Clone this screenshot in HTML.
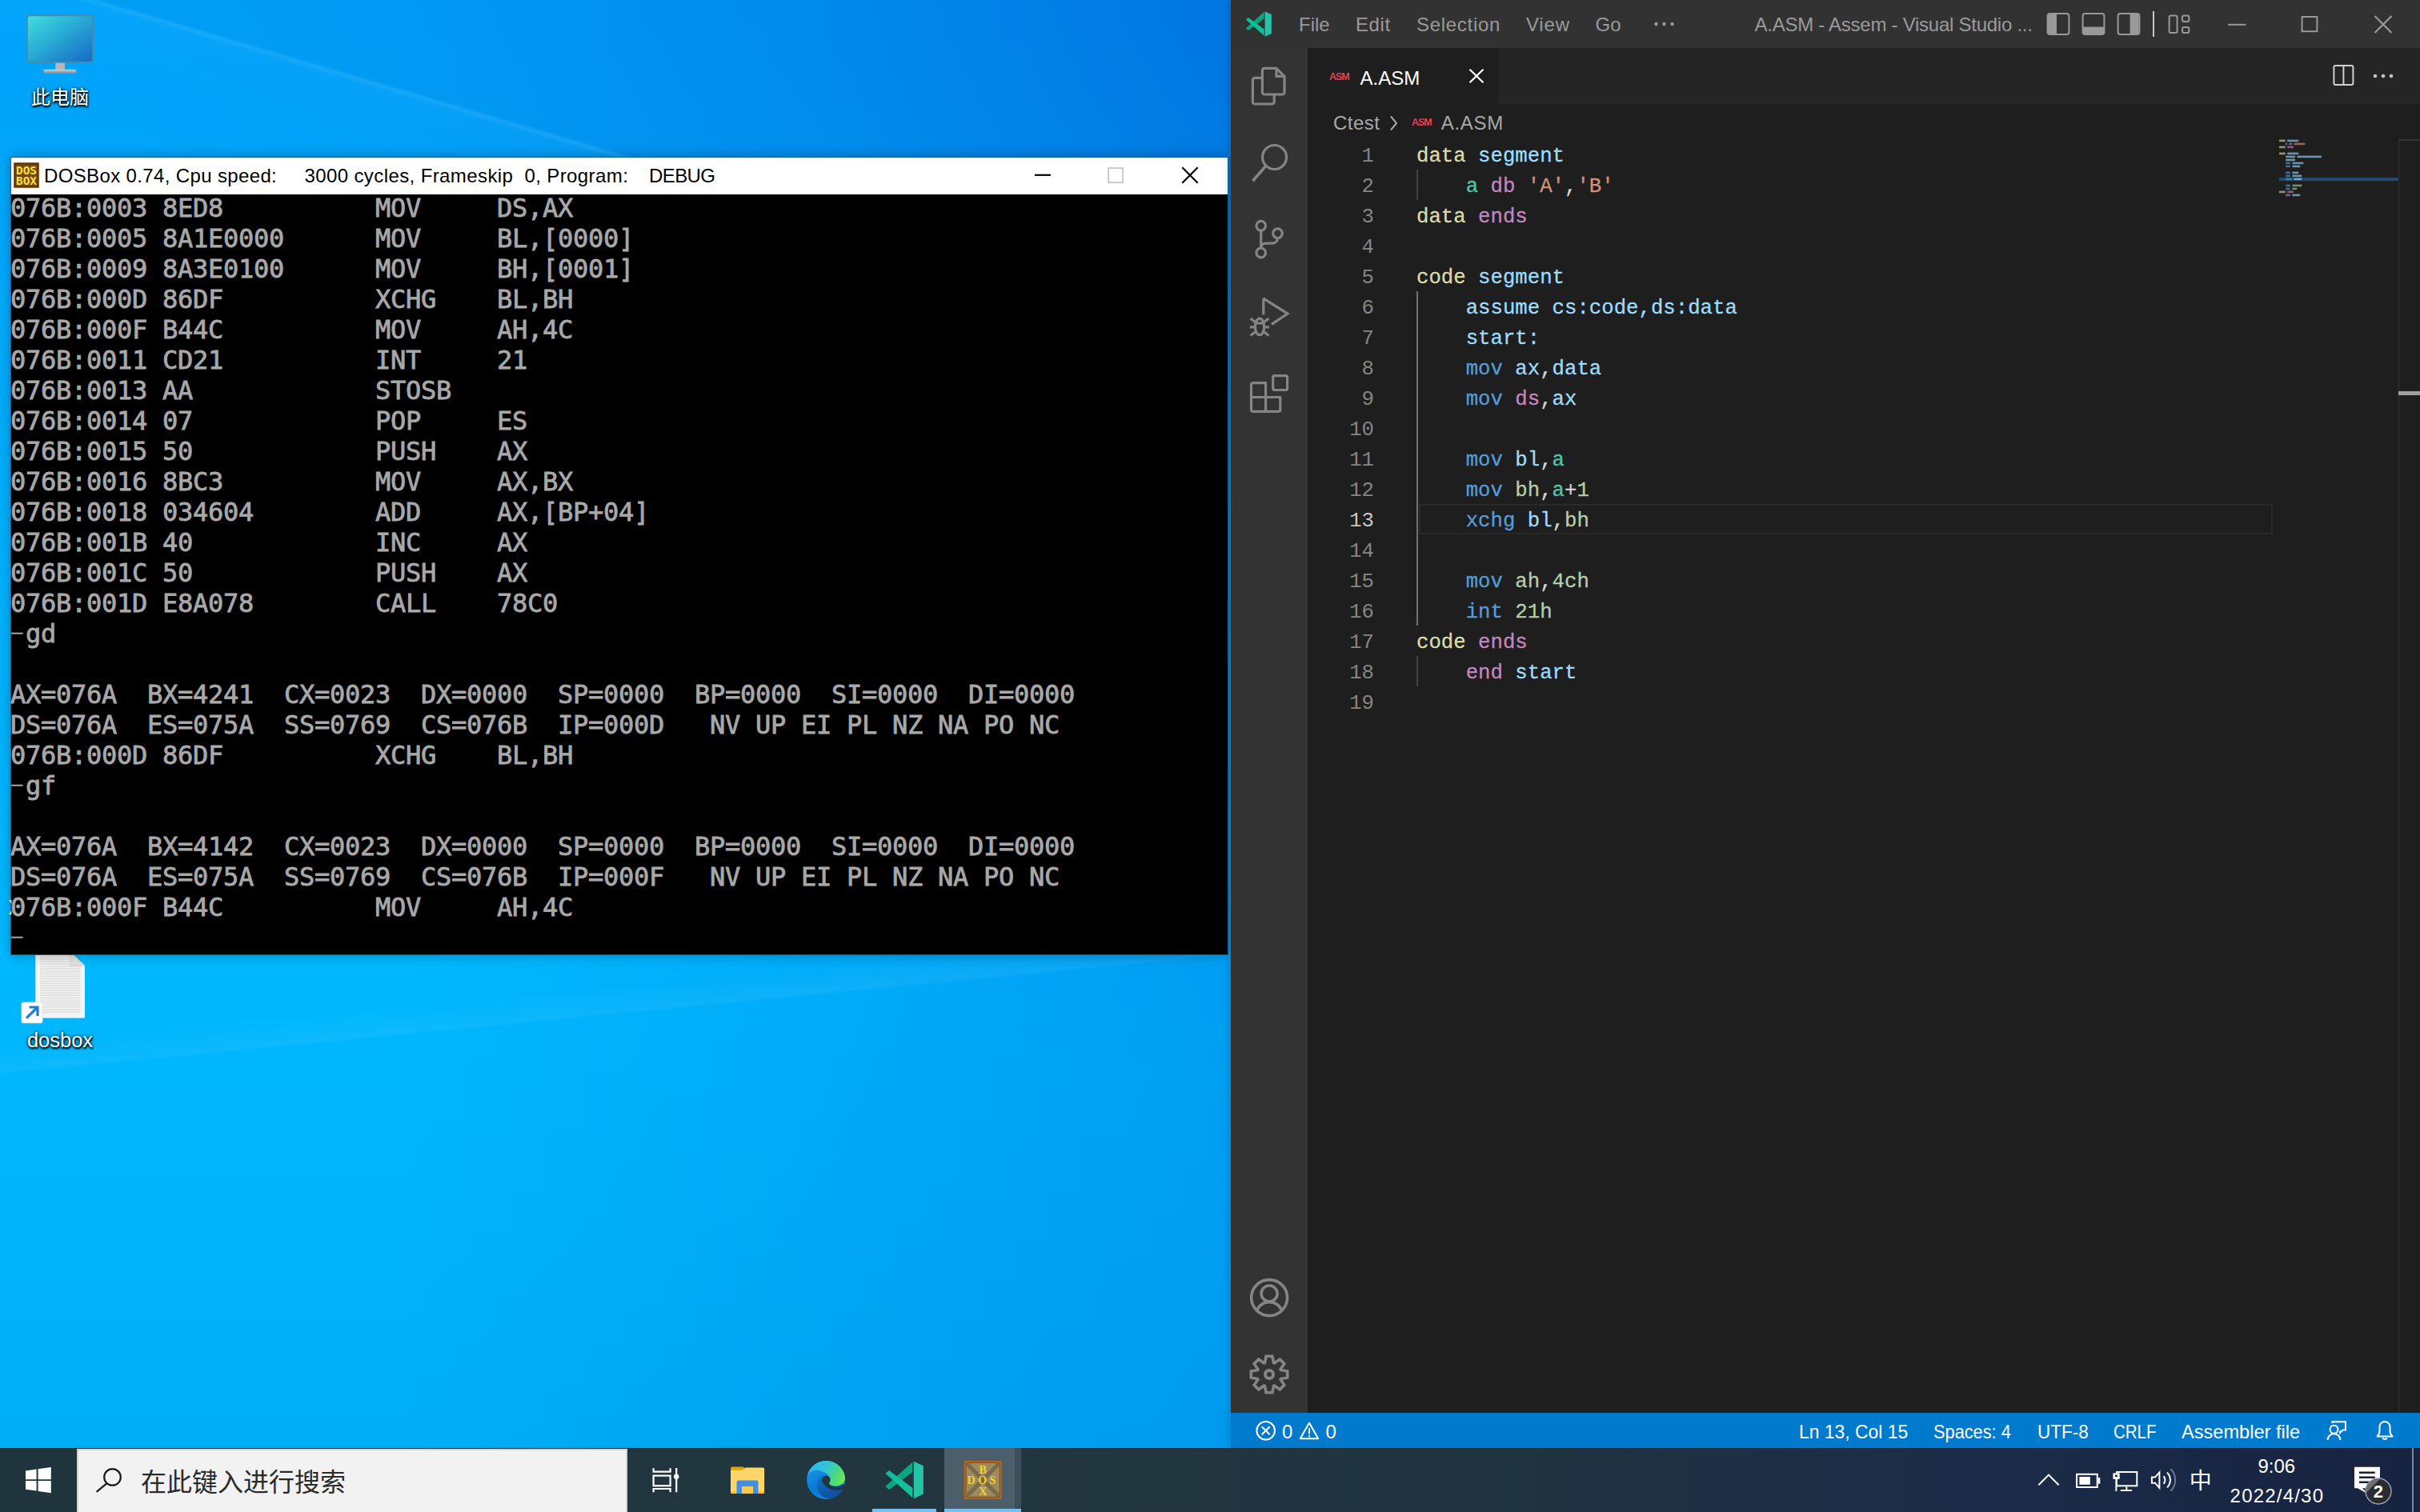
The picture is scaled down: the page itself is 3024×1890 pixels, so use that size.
<!DOCTYPE html>
<html lang="zh">
<head>
<meta charset="utf-8">
<title>Desktop</title>
<style>
*{box-sizing:border-box;margin:0;padding:0}
html,body{width:3024px;height:1890px;overflow:hidden}
body{position:relative;font-family:"Liberation Sans","Noto Sans CJK SC",sans-serif;background:#00a2f0;}
.abs{position:absolute}
#wall{position:absolute;left:0;top:0;width:3024px;height:1890px;
 background:
  radial-gradient(ellipse 1800px 1500px at 1900px -100px, rgba(0,70,200,.40) 0%, rgba(0,70,200,.30) 24%, rgba(0,70,200,.12) 52%, rgba(0,70,200,.07) 73%, rgba(0,70,200,0) 100%),
  linear-gradient(90deg, rgba(0,100,220,0) 500px, rgba(0,100,220,.27) 1540px),
  linear-gradient(180deg,#00a3fa 0px,#00a6fa 200px,#00b0fc 700px,#00b8fe 1200px,#00b4fa 1500px,#00aef5 1810px);}
#ray1{position:absolute;left:0;top:0;width:1540px;height:200px;overflow:hidden}
/* DOSBox window */
#dos{position:absolute;left:13px;top:196px;width:1522px;height:998px;background:#000;border:1px solid #0f5f9c;box-shadow:0 0 14px rgba(0,0,0,.28)}
#dostitle{position:absolute;left:0;top:0;width:1520px;height:46px;background:#fff;color:#000;font-size:24px;line-height:46px;white-space:pre}
#dostitle span{position:absolute;top:0}
#dosscreen{position:absolute;left:0;top:46px;width:1520px;height:950px;background:#000;color:#a8a8a8;text-indent:0;padding-left:0;
 font-family:"DejaVu Sans Mono","Liberation Mono",monospace;font-weight:normal;-webkit-text-stroke:.8px #a8a8a8;font-size:32px;line-height:38px;white-space:pre;letter-spacing:-0.264px}
/* VS Code */
#vsc{position:absolute;left:1538px;top:0;width:1486px;height:1810px;background:#1e1e1e;box-shadow:-3px 0 10px rgba(0,0,0,.13)}
#vtitle{position:absolute;left:0;top:0;width:1486px;height:60px;background:#323233;color:#9a9a9a;font-size:24px;line-height:62px}
#vtitle span{position:absolute;top:0;white-space:pre}
#act{position:absolute;left:0;top:60px;width:96px;height:1706px;background:#333333}
#tabs{position:absolute;left:96px;top:60px;width:1390px;height:70px;background:#252526}
#tab{position:absolute;left:0;top:0;width:238px;height:70px;background:#1e1e1e;color:#fff;font-size:24px;line-height:70px}
#crumbs{position:absolute;left:96px;top:130px;width:1390px;height:44px;color:#a9a9a9;font-size:24px;line-height:47.400px}
#crumbs span{position:absolute;top:0;white-space:pre}
#code{position:absolute;left:96px;top:174px;width:1390px;height:1592px;font-family:"Liberation Mono",monospace;font-size:25.7px;line-height:38px;color:#d4d4d4;white-space:pre}
.ln{position:absolute;left:0;width:83px;text-align:right;color:#858585;height:38px;margin-top:2.500px}
.cl{position:absolute;left:136px;height:38px;margin-top:2.600px;-webkit-text-stroke:.3px currentColor}
.asm{color:#e3414f;font-size:12.5px;font-weight:bold;letter-spacing:-1.1px}
.y{color:#dcdcaa}.b{color:#9cdcfe}.t{color:#4ec9b0}.p{color:#c586c0}.o{color:#ce9178}.k{color:#569cd6}.n{color:#b5cea8}
#status{position:absolute;left:0;top:1766px;width:1486px;height:44px;background:#007acc;color:#fff;font-size:24px;line-height:48px}
#status span{position:absolute;top:0;white-space:pre;transform-origin:0 0}
/* taskbar */
#task{position:absolute;left:0;top:1810px;width:3024px;height:80px;background:linear-gradient(90deg,#20343e 0px,#22363f 1300px,#203340 1900px,#1e2e44 2200px,#1b2b48 2500px,#162341 3024px)}
#search{position:absolute;left:96px;top:1px;width:688px;height:80px;background:#f2f2f2;border:2px solid #d4d4d4;border-bottom:none;color:#2b2b2b;font-size:32px;line-height:80px}
.dash{display:inline-block;transform:translate(-1.500px,-1.800px) scale(1.650,.560)}
.dlabel{position:absolute;color:#fff;font-size:24px;text-align:center;text-shadow:0 1px 3px rgba(0,0,0,.9),0 0 4px rgba(0,0,0,.7),1px 2px 2px rgba(0,0,0,.8)}
</style>
</head>
<body>
<div id="wall"></div>
<div class="abs" style="left:0;top:0;width:1540px;height:200px;background:linear-gradient(196.400deg,rgba(0,50,150,.045) 0,rgba(0,50,150,.045) 63.600%,rgba(255,255,255,.085) 64.300%,rgba(255,255,255,.02) 65.300%,rgba(255,255,255,0) 80%)"></div>
<div class="abs" style="left:0;top:1194px;width:1538px;height:616px;overflow:hidden"><div class="abs" style="left:-50px;top:81px;width:1700px;height:140px;transform-origin:0 0;transform:rotate(-5.500deg);background:linear-gradient(180deg,rgba(255,255,255,0) 25%,rgba(255,255,255,.05) 49%,rgba(255,255,255,0) 52%)"></div></div>
<!-- desktop icons -->
<svg class="abs" style="left:0;top:0" width="200" height="160" viewBox="0 0 200 160">
<defs><linearGradient id="mon" x1="0" y1="0" x2="1" y2="1"><stop offset="0" stop-color="#3fe0dc"/><stop offset=".5" stop-color="#27a6d3"/><stop offset="1" stop-color="#1568c4"/></linearGradient><linearGradient id="base" x1="0" y1="0" x2="0" y2="1"><stop offset="0" stop-color="#cfd3d6"/><stop offset="1" stop-color="#7e848a"/></linearGradient></defs>
<rect x="69.300" y="78" width="11.600" height="10" fill="#b4b9bd"/>
<rect x="54.500" y="86.800" width="40.700" height="5.200" rx="1.500" fill="url(#base)"/>
<rect x="33.800" y="19.200" width="82.400" height="58.600" rx="4" fill="url(#mon)" stroke="#4a8aad" stroke-width="2"/>
</svg>
<div class="dlabel" style="left:15px;top:105px;width:120px;font-size:24px;line-height:34px">此电脑</div>
<svg class="abs" style="left:20px;top:1190px" width="100" height="95" viewBox="20 1190 100 95">
<defs><pattern id="lines" x="0" y="1195.500" width="10" height="3" patternUnits="userSpaceOnUse"><rect x="0" y="0" width="10" height="1.200" fill="#d4d4d4"/></pattern></defs>
<path d="M44.300,1190 H88 L106,1207 V1272.400 H44.300 Z" fill="#f5f5f5"/>
<rect x="50" y="1195.500" width="37" height="12" fill="url(#lines)"/><rect x="50" y="1207.500" width="50.500" height="59" fill="url(#lines)"/>
<path d="M88,1190 V1207 H106 Z" fill="#e2e2e2"/><path d="M88,1193 V1207 H106" fill="none" stroke="#cfcfcf" stroke-width="1"/>
<rect x="27" y="1253" width="26" height="25.700" rx="2" fill="#fff" stroke="#d8e6f2" stroke-width="1"/>
<path d="M33,1272.500 L46,1260 M36.500,1259 H47 V1270" fill="none" stroke="#1f7fd8" stroke-width="3.200"/>
</svg>
<div class="dlabel" style="left:15px;top:1282.500px;width:120px;font-size:25.500px;line-height:34px">dosbox</div>

<!-- DOSBOX -->
<svg class="abs" style="left:8px;top:1122px;z-index:5" width="8" height="24" viewBox="0 0 8 24"><path d="M3,3 L6.500,3 L6.500,8 Z M3,21 L6.500,21 L6.500,16 Z" fill="#fff" opacity=".85"/></svg>
<div id="dos">
<div id="dostitle"><svg class="abs" style="left:0;top:0" width="1520" height="46" viewBox="14 197 1520 46">
<rect x="17.200" y="203.200" width="31.600" height="31.600" fill="#7a4711"/><rect x="18.700" y="204.700" width="28.600" height="28.600" fill="none" stroke="#5a3208" stroke-width="1.500"/>
<g font-family="'DejaVu Sans Mono','Liberation Mono',monospace" font-weight="bold" font-size="13.500" fill="#f7e23c" text-anchor="middle"><text x="33" y="217.500" textLength="26" lengthAdjust="spacingAndGlyphs">DOS</text><text x="33" y="231" textLength="26" lengthAdjust="spacingAndGlyphs">BOX</text></g>
<path d="M1293,218.800 h20" stroke="#000" stroke-width="2.200"/>
<rect x="1385.100" y="210.100" width="18" height="18" fill="none" stroke="#cacaca" stroke-width="2"/>
<path d="M1477.300,209.300 l19.400,19.400 M1496.700,209.300 l-19.400,19.400" stroke="#000" stroke-width="2.200"/>
</svg><span style="left:41px;letter-spacing:.36px">DOSBox 0.74, Cpu speed:</span><span style="left:366.400px;letter-spacing:.4px">3000 cycles, Frameskip  0, Program:</span><span style="left:797px;letter-spacing:-.6px">DEBUG</span></div>
<div id="dosscreen"><div style="position:absolute;left:-1px;top:-2px">076B:0003 8ED8          MOV     DS,AX
076B:0005 8A1E0000      MOV     BL,[0000]
076B:0009 8A3E0100      MOV     BH,[0001]
076B:000D 86DF          XCHG    BL,BH
076B:000F B44C          MOV     AH,4C
076B:0011 CD21          INT     21
076B:0013 AA            STOSB
076B:0014 07            POP     ES
076B:0015 50            PUSH    AX
076B:0016 8BC3          MOV     AX,BX
076B:0018 034604        ADD     AX,[BP+04]
076B:001B 40            INC     AX
076B:001C 50            PUSH    AX
076B:001D E8A078        CALL    78C0
<span class="dash">-</span>gd

AX=076A  BX=4241  CX=0023  DX=0000  SP=0000  BP=0000  SI=0000  DI=0000
DS=076A  ES=075A  SS=0769  CS=076B  IP=000D   NV UP EI PL NZ NA PO NC
076B:000D 86DF          XCHG    BL,BH
<span class="dash">-</span>gf

AX=076A  BX=4142  CX=0023  DX=0000  SP=0000  BP=0000  SI=0000  DI=0000
DS=076A  ES=075A  SS=0769  CS=076B  IP=000F   NV UP EI PL NZ NA PO NC
076B:000F B44C          MOV     AH,4C
<span class="dash">-</span></div></div>
</div>

<!-- VS CODE -->
<div id="vsc">
<div id="vtitle"><svg class="abs" style="left:0;top:0" width="1486" height="60" viewBox="0 0 1486 60">
<polygon points="42.6,14.4 50.8,18.1 50.8,41.9 42.6,45.7" fill="#27c3a6"/>
<polygon points="18.9,35.3 22,38.1 41.7,23.2 41.7,14.8" fill="#0aa683"/>
<polygon points="18.9,24.5 21.9,21.9 41.7,36.6 41.7,44.7" fill="#10bf9b"/>
<g fill="#9a9a9a"><circle cx="531.5" cy="30" r="2.2"/><circle cx="541.5" cy="30" r="2.2"/><circle cx="551.5" cy="30" r="2.2"/></g>
<g fill="none" stroke="#999" stroke-width="2">
<rect x="1020.6" y="17" width="26.8" height="26" rx="3"/><path d="M1021,18 h11 v24 h-11 z" fill="#999" stroke="none"/>
<rect x="1064.6" y="17" width="26.8" height="26" rx="3"/><path d="M1065,33.6 h26 v8.4 h-26 z" fill="#999" stroke="none"/>
<rect x="1108.6" y="17" width="26.8" height="26" rx="3"/><path d="M1123.6,18 h11 v24 h-11 z" fill="#999" stroke="none"/>
<rect x="1172.6" y="19.4" width="10" height="21.6" rx="2"/><rect x="1189" y="19.4" width="8.4" height="7.6" rx="2"/><rect x="1189" y="34" width="8.4" height="7" rx="2"/>
<path d="M1246,30.8 h22.4"/>
<rect x="1338.6" y="21" width="18.8" height="18.2"/>
<path d="M1429.5,20 l21,21 M1450.5,20 l-21,21" stroke-width="2.2"/>
</g>
<rect x="1152" y="14" width="2" height="32" fill="#c8c8c8"/>
</svg><span style="left:85px">File</span><span style="left:156px;letter-spacing:.6px">Edit</span><span style="left:232px;letter-spacing:.7px">Selection</span><span style="left:369px;letter-spacing:.8px">View</span><span style="left:455.500px">Go</span><span style="left:654.500px;letter-spacing:-.26px">A.ASM - Assem - Visual Studio ...</span></div>
<div id="act"><svg class="abs" style="left:0;top:0" width="96" height="1706" viewBox="0 0 96 1706" fill="none" stroke="#858585" stroke-width="3.2" stroke-linejoin="round">
<g><path d="M57,25.4 H42 a2.6,2.6 0 0 0 -2.6,2.6 V55.4 a2.6,2.6 0 0 0 2.6,2.6 H64.4 a2.6,2.6 0 0 0 2.6,-2.6 V35.4 Z M57,25.4 V35.4 H67"/><path d="M39.3,37.3 H30 a2.6,2.6 0 0 0 -2.6,2.6 V67.4 a2.6,2.6 0 0 0 2.6,2.6 H51.6 a2.6,2.6 0 0 0 2.6,-2.6 V58"/></g>
<g transform="translate(0,96)"><circle cx="54.6" cy="40.5" r="15"/><path d="M44,51.1 L27.4,70.2" stroke-width="3.6"/></g>
<g transform="translate(0,192)"><circle cx="37.7" cy="30.2" r="5.8"/><circle cx="58.5" cy="39.7" r="5.8"/><circle cx="37.7" cy="64" r="5.8"/><path d="M37.7,36 V58.2 M58.5,45.5 c0,4 -3,6.6 -7,6.6 h-7 c-4,0 -6.8,2 -6.8,6"/></g>
<g transform="translate(0,288)"><path d="M40.8,45.5 V25.2 L71,44.1 L51,57.3" stroke-linejoin="miter" stroke-miterlimit="2"/><ellipse cx="36" cy="60.4" rx="5.6" ry="10.3"/><path d="M30.6,56 H41.4 M24.5,50 L30.5,54.5 M24,60.8 H30.4 M24.5,71.5 L30.5,67 M47.5,50 L41.5,54.5 M48,60.8 H41.6 M47.5,71.5 L41.5,67"/></g>
<g transform="translate(0,384)"><rect x="52.7" y="25.6" width="17.9" height="17.9" rx="2"/><path d="M43.6,34.7 H28 a2.5,2.5 0 0 0 -2.5,2.5 V67.9 a2.5,2.5 0 0 0 2.5,2.5 H59.3 a2.5,2.5 0 0 0 2.5,-2.5 V52.5 H43.6 Z M43.6,52.5 V70.4 M25.5,52.5 H43.6"/></g>
<g stroke-width="3.6"><circle cx="48.1" cy="1562.1" r="22.5"/><circle cx="48.1" cy="1557" r="10"/><path d="M32.5,1578.5 a16.5,16.5 0 0 1 31.2,0"/></g>
<g stroke-width="3.6" stroke-linejoin="miter"><path d="M42.5,1643.5 L44.1,1635.3 L51.9,1635.3 L53.5,1643.5 L54.4,1643.9 L61.3,1639.2 L66.8,1644.7 L62.1,1651.6 L62.5,1652.5 L70.7,1654.1 L70.7,1661.9 L62.5,1663.5 L62.1,1664.4 L66.8,1671.3 L61.3,1676.8 L54.4,1672.1 L53.5,1672.5 L51.9,1680.7 L44.1,1680.7 L42.5,1672.5 L41.6,1672.1 L34.7,1676.8 L29.2,1671.3 L33.9,1664.4 L33.5,1663.5 L25.3,1661.9 L25.3,1654.1 L33.5,1652.5 L33.9,1651.6 L29.2,1644.7 L34.7,1639.2 L41.6,1643.9Z"/><circle cx="48" cy="1658" r="5" stroke-width="4"/></g>
</svg></div>
<div id="tabs"><div id="tab"><span class="abs asm" style="left:27px;top:.500px">ASM</span><span class="abs" style="left:65.500px;top:2.500px">A.ASM</span><svg class="abs" style="left:200.500px;top:25px" width="20" height="20" viewBox="0 0 20 20"><path d="M1.5,1.8 L18.5,18.2 M18.5,1.8 L1.5,18.2" stroke="#fff" stroke-width="2.2" fill="none"/></svg></div><svg class="abs" style="left:1271px;top:16px" width="100" height="40" viewBox="0 0 100 40" fill="none" stroke="#d0d0d0" stroke-width="2"><rect x="11.4" y="6" width="24" height="24" rx="2"/><path d="M23.4,6 v24"/><g fill="#c5c5c5" stroke="none"><circle cx="63" cy="19" r="2.3"/><circle cx="73" cy="19" r="2.3"/><circle cx="83" cy="19" r="2.3"/></g></svg></div>
<div id="crumbs"><span style="left:32px;letter-spacing:.5px">Ctest</span><svg class="abs" style="left:100px;top:10px" width="16" height="26" viewBox="0 0 16 26"><path d="M4,5.500 L11,14 L4,22.500" fill="none" stroke="#a9a9a9" stroke-width="2"/></svg><span class="asm" style="left:130px">ASM</span><span style="left:166.800px;letter-spacing:.7px">A.ASM</span></div>
<div id="code"><div class="abs" style="left:139px;top:456px;width:1067px;height:38px;border:2px solid #2a2a2a"></div><div class="abs" style="left:136px;top:38px;width:2px;height:38px;background:#404040"></div><div class="abs" style="left:136px;top:190px;width:2px;height:418px;background:#707070"></div><div class="abs" style="left:136px;top:646px;width:2px;height:38px;background:#404040"></div><div class="ln" style="top:0px">1</div><div class="cl" style="top:0px"><span class="y">data</span> <span class="b">segment</span></div><div class="ln" style="top:38px">2</div><div class="cl" style="top:38px">    <span class="t">a</span> <span class="p">db</span> <span class="o">'A'</span>,<span class="o">'B'</span></div><div class="ln" style="top:76px">3</div><div class="cl" style="top:76px"><span class="y">data</span> <span class="p">ends</span></div><div class="ln" style="top:114px">4</div><div class="cl" style="top:114px"></div><div class="ln" style="top:152px">5</div><div class="cl" style="top:152px"><span class="y">code</span> <span class="b">segment</span></div><div class="ln" style="top:190px">6</div><div class="cl" style="top:190px">    <span class="b">assume cs:code,ds:data</span></div><div class="ln" style="top:228px">7</div><div class="cl" style="top:228px">    <span class="b">start:</span></div><div class="ln" style="top:266px">8</div><div class="cl" style="top:266px">    <span class="k">mov</span> <span class="b">ax</span>,<span class="b">data</span></div><div class="ln" style="top:304px">9</div><div class="cl" style="top:304px">    <span class="k">mov</span> <span class="p">ds</span>,<span class="b">ax</span></div><div class="ln" style="top:342px">10</div><div class="cl" style="top:342px"></div><div class="ln" style="top:380px">11</div><div class="cl" style="top:380px">    <span class="k">mov</span> <span class="b">bl</span>,<span class="t">a</span></div><div class="ln" style="top:418px">12</div><div class="cl" style="top:418px">    <span class="k">mov</span> <span class="n">bh</span>,<span class="t">a</span>+<span class="n">1</span></div><div class="ln" style="top:456px;color:#c6c6c6">13</div><div class="cl" style="top:456px">    <span class="k">xchg</span> <span class="b">bl</span>,<span class="n">bh</span></div><div class="ln" style="top:494px">14</div><div class="cl" style="top:494px"></div><div class="ln" style="top:532px">15</div><div class="cl" style="top:532px">    <span class="k">mov</span> <span class="n">ah</span>,<span class="n">4ch</span></div><div class="ln" style="top:570px">16</div><div class="cl" style="top:570px">    <span class="k">int</span> <span class="n">21h</span></div><div class="ln" style="top:608px">17</div><div class="cl" style="top:608px"><span class="y">code</span> <span class="p">ends</span></div><div class="ln" style="top:646px">18</div><div class="cl" style="top:646px">    <span class="p">end</span> <span class="b">start</span></div><div class="ln" style="top:684px">19</div><div class="cl" style="top:684px"></div></div>
<svg class="abs" style="left:1310px;top:174px" width="176" height="120" viewBox="2848 174 176 120"><rect x="2848" y="222" width="148.500" height="4.200" fill="#264f78" opacity=".85"/><rect x="2848.0" y="174.6" width="7.8" height="2.6" fill="#dcdcaa" opacity=".62"/><rect x="2858.2" y="174.6" width="13.9" height="2.6" fill="#9cdcfe" opacity=".62"/><rect x="2856.2" y="178.6" width="1.6" height="2.6" fill="#9cdcfe" opacity=".62"/><rect x="2860.3" y="178.6" width="3.7" height="2.6" fill="#c586c0" opacity=".62"/><rect x="2866.4" y="178.6" width="13.9" height="2.6" fill="#ce9178" opacity=".62"/><rect x="2848.0" y="182.6" width="7.8" height="2.6" fill="#dcdcaa" opacity=".62"/><rect x="2858.2" y="182.6" width="7.8" height="2.6" fill="#c586c0" opacity=".62"/><rect x="2848.0" y="190.6" width="7.8" height="2.6" fill="#dcdcaa" opacity=".62"/><rect x="2858.2" y="190.6" width="13.9" height="2.6" fill="#9cdcfe" opacity=".62"/><rect x="2856.2" y="194.6" width="11.9" height="2.6" fill="#9cdcfe" opacity=".62"/><rect x="2870.6" y="194.6" width="30.3" height="2.6" fill="#9cdcfe" opacity=".62"/><rect x="2856.2" y="198.6" width="11.9" height="2.6" fill="#9cdcfe" opacity=".62"/><rect x="2856.2" y="202.6" width="5.7" height="2.6" fill="#569cd6" opacity=".62"/><rect x="2864.4" y="202.6" width="13.9" height="2.6" fill="#9cdcfe" opacity=".62"/><rect x="2856.2" y="206.6" width="5.7" height="2.6" fill="#569cd6" opacity=".62"/><rect x="2864.4" y="206.6" width="9.8" height="2.6" fill="#9cdcfe" opacity=".62"/><rect x="2856.2" y="214.6" width="5.7" height="2.6" fill="#569cd6" opacity=".62"/><rect x="2864.4" y="214.6" width="7.8" height="2.6" fill="#9cdcfe" opacity=".62"/><rect x="2856.2" y="218.6" width="5.7" height="2.6" fill="#569cd6" opacity=".62"/><rect x="2864.4" y="218.6" width="11.9" height="2.6" fill="#9cdcfe" opacity=".62"/><rect x="2856.2" y="222.6" width="7.8" height="2.6" fill="#569cd6" opacity=".62"/><rect x="2866.4" y="222.6" width="9.8" height="2.6" fill="#9cdcfe" opacity=".62"/><rect x="2856.2" y="230.6" width="5.7" height="2.6" fill="#569cd6" opacity=".62"/><rect x="2864.4" y="230.6" width="11.9" height="2.6" fill="#b5cea8" opacity=".62"/><rect x="2856.2" y="234.6" width="5.7" height="2.6" fill="#569cd6" opacity=".62"/><rect x="2864.4" y="234.6" width="5.7" height="2.6" fill="#b5cea8" opacity=".62"/><rect x="2848.0" y="238.6" width="7.8" height="2.6" fill="#dcdcaa" opacity=".62"/><rect x="2858.2" y="238.6" width="7.8" height="2.6" fill="#c586c0" opacity=".62"/><rect x="2856.2" y="242.6" width="5.7" height="2.6" fill="#c586c0" opacity=".62"/><rect x="2864.4" y="242.6" width="9.8" height="2.6" fill="#9cdcfe" opacity=".62"/></svg><div class="abs" style="left:1458.500px;top:174px;width:1.500px;height:1592px;background:#343434"></div><div class="abs" style="left:1458.500px;top:174px;width:28px;height:1.500px;background:#343434"></div><div class="abs" style="left:1459px;top:489px;width:27px;height:5px;background:#a0a0a0"></div>
<div id="status"><svg class="abs" style="left:0;top:0" width="1486" height="44" viewBox="1538 1766 1486 44" fill="none" stroke="#fff" stroke-width="2">
<circle cx="1581.700" cy="1788.300" r="11.300"/><path d="M1576.700,1783.300 l10,10 M1586.700,1783.300 l-10,10"/>
<path d="M1636,1778.600 L1647.200,1798.200 H1624.800 Z" stroke-linejoin="round"/><path d="M1636,1785 v7.500 M1636,1794 v2.200"/>
<!-- feedback -->
<circle cx="2916.500" cy="1786.700" r="5"/><path d="M2908.600,1800 a7.900,7.700 0 0 1 15.800,0"/><path d="M2914.500,1779 V1777.300 H2931 V1787.500 H2927.500 L2924,1791 V1788.500"/>
<!-- bell -->
<path d="M2970.500,1795.500 c2,-2 3,-4 3,-7 v-5 a6.500,6.500 0 0 1 13,0 v5 c0,3 1,5 3,7 Z" stroke-linejoin="round"/><path d="M2977.500,1797.200 a2.600,2.600 0 0 0 5,0"/>
</svg><span style="left:64px">0</span><span style="left:118.500px">0</span><span style="left:709.500px;transform:scaleX(.954)">Ln 13, Col 15</span><span style="left:878px;transform:scaleX(.907)">Spaces: 4</span><span style="left:1008px;transform:scaleX(.936)">UTF-8</span><span style="left:1102.500px;transform:scaleX(.854)">CRLF</span><span style="left:1188px;transform:scaleX(.983)">Assembler file</span></div>
</div>

<!-- TASKBAR -->
<div id="task">
<div class="abs" style="left:1180px;top:0;width:88px;height:80px;background:#4b5e6a"></div>
<div class="abs" style="left:1268px;top:0;width:8px;height:80px;background:#3b4e5a"></div>
<div class="abs" style="left:1090px;top:76px;width:80px;height:4px;background:#76c0f2"></div>
<div class="abs" style="left:1180px;top:76px;width:96px;height:4px;background:#76c0f2"></div>
<div id="search"><span class="abs" style="left:78px;top:0">在此键入进行搜索</span></div>
<svg class="abs" style="left:0;top:0" width="3024" height="80" viewBox="0 1810 3024 80">
<!-- start -->
<g fill="#fff"><polygon points="32,1838.4 45.6,1836.5 45.6,1849.2 32,1849.2"/><polygon points="47.6,1836.2 63.8,1833.9 63.8,1849.2 47.6,1849.2"/><polygon points="32,1851 45.6,1851 45.6,1863.6 32,1861.7"/><polygon points="47.6,1851 63.8,1851 63.8,1866.2 47.6,1863.9"/></g>
<!-- search icon -->
<g fill="none" stroke="#1a1a1a" stroke-width="2.2"><circle cx="140.5" cy="1846.4" r="10.3"/><path d="M133.6,1854.2 L120.6,1864.9"/></g>
<!-- task view -->
<g fill="none" stroke="#fff" stroke-width="2.2"><rect x="816.6" y="1844.6" width="21" height="12.6"/><path d="M816.6,1835.2 V1839.6 H837.6 V1835.2 M816.6,1865.2 V1861 H837.6 V1865.2 M845.2,1835 V1865.2"/><circle cx="845.2" cy="1845.8" r="3.2" fill="#fff" stroke="none"/></g>
<!-- explorer -->
<g><path d="M913,1835.5 a2,2 0 0 1 2,-2 h13.5 l3.5,3.5 h-19z" fill="#e8a400"/><path d="M913,1837.2 h15 l3.5,-2.8 h21.6 a2,2 0 0 1 2,2 v28.6 a2,2 0 0 1 -2,2 h-38.1 a2,2 0 0 1 -2,-2z" fill="#ffd667"/><path d="M913,1864 h42.1 v1 a2,2 0 0 1 -2,2 h-38.1 a2,2 0 0 1 -2,-2z" fill="#f7c23f"/><path d="M920.5,1867 v-14.5 a2,2 0 0 1 2,-2 h23 a2,2 0 0 1 2,2 v14.5 h-6.5 v-9 h-14 v9z" fill="#3f8fe6"/><rect x="927" y="1858" width="14" height="9" fill="#fbcb4d"/></g>
<!-- edge -->
<defs><linearGradient id="eg1" x1="0" y1="0" x2=".6" y2="1"><stop offset="0" stop-color="#1fa0e8"/><stop offset=".6" stop-color="#0a7bd6"/><stop offset="1" stop-color="#1286dc"/></linearGradient><linearGradient id="eg2" x1="0" y1=".3" x2="1" y2=".6"><stop offset="0" stop-color="#33b5f5"/><stop offset=".45" stop-color="#2fc4d6"/><stop offset=".8" stop-color="#4fdc78"/><stop offset="1" stop-color="#6ee556"/></linearGradient><linearGradient id="eg3" x1="0" y1="0" x2="1" y2="1"><stop offset="0" stop-color="#1277cc"/><stop offset=".5" stop-color="#0f58a8"/><stop offset="1" stop-color="#134a9c"/></linearGradient></defs>
<circle cx="1032.200" cy="1850" r="24" fill="url(#eg1)"/>
<path d="M1026.500,1845 C1020.500,1850 1019,1858.500 1022.500,1865 C1026.500,1871.500 1034,1874.300 1040.500,1872.800 C1046.500,1871 1051,1866.500 1053.300,1860.500 C1054,1858.500 1054.500,1857 1054.500,1856 L1037,1844 Z" fill="url(#eg3)"/>
<path d="M1027.300,1848.500 C1028.800,1844.500 1034,1843.700 1036.800,1846.500 C1038.800,1849 1037.800,1852 1036,1854 C1035.600,1856.200 1039,1858.600 1044,1859.200 C1049,1859.600 1054,1858 1058,1852 L1058,1858 C1056,1860 1054,1861 1052.200,1861.500 C1046,1863.700 1039,1862.700 1034,1859.200 C1029,1855.500 1026,1852 1027.300,1848.500 Z" fill="#22363f"/>
<path d="M1008.700,1845.200 A24,24 0 0 1 1056.130,1848 C1055.900,1851.500 1054.500,1853.300 1052.900,1854.500 C1050.500,1856.500 1047.800,1857.400 1044.500,1857.500 C1041.500,1857.500 1038.500,1856.600 1037.200,1855.700 C1036.200,1855 1036,1854.300 1036.300,1853.600 C1038,1851 1038.300,1848 1035.600,1845.100 C1034,1842.500 1030.500,1840.400 1027,1839 C1023.700,1837.700 1019.500,1837.300 1016.900,1837.900 C1014,1838.500 1010.500,1840.500 1008.700,1845.200 Z" fill="url(#eg2)"/>
<!-- vscode -->
<polygon points="1141.800,1826.800 1153.800,1832.200 1153.800,1867.600 1141.800,1873.200" fill="#27c3a6"/>
<polygon points="1106.400,1858 1111,1862.200 1140.400,1840 1140.400,1827.400" fill="#0aa683"/>
<polygon points="1106.400,1841.800 1111,1837.900 1140.400,1860 1140.400,1872.200" fill="#10bf9b"/>
<!-- dosbox -->
<rect x="1204.500" y="1826" width="47.300" height="47.800" fill="#8a4a1c"/><rect x="1207.500" y="1829" width="41.300" height="41.800" fill="#9c8a60"/>
<path d="M1207.500,1829 L1248.800,1870.800 M1248.800,1829 L1207.500,1870.800" stroke="#7a6a48" stroke-width="5"/>
<rect x="1205.500" y="1827" width="45.300" height="45.800" fill="none" stroke="#b5651d" stroke-width="2"/>
<g font-family="'Liberation Serif',serif" font-weight="bold" font-size="14" fill="#f6d22a" text-anchor="middle"><text x="1228.200" y="1841.500">B</text><text x="1228.200" y="1855.300" letter-spacing="3.500">DOS</text><text x="1228.200" y="1869.200">X</text></g>
<!-- tray -->
<g fill="none" stroke="#fff" stroke-width="2">
<path d="M2547.400,1856.300 L2560,1843.600 L2572.600,1856.300"/>
<rect x="2595.100" y="1842.800" width="25.600" height="16.200"/><rect x="2598.400" y="1846" width="13.400" height="9.800" fill="#fff" stroke="none"/><rect x="2621.700" y="1847.200" width="2.600" height="7.500" fill="#fff" stroke="none"/>
<rect x="2645" y="1840" width="25.300" height="17.300"/><path d="M2657.300,1858.300 V1863 M2649.800,1863 H2664"/><rect x="2640.400" y="1841.400" width="8.300" height="7.500" fill="#fff" stroke="none"/><rect x="2643" y="1843.600" width="2.800" height="2.600" fill="#1b2c47" stroke="none"/><path d="M2644.400,1848 V1864"/>
<path d="M2688.900,1846.600 H2693 L2698.400,1840.400 V1859.800 L2693,1853.700 H2688.900 Z"/>
<path d="M2703.500,1845.300 a6.600,6.600 0 0 1 0,9.400 M2708,1840.600 a13.200,13.200 0 0 1 0,18.800"/><path d="M2712.500,1836.300 a19.400,19.400 0 0 1 0,27.400" stroke="#6d7a92"/>
</g>
<text x="2749.700" y="1861" font-size="28" fill="#fff" text-anchor="middle" font-family="'Liberation Sans','Noto Sans CJK SC',sans-serif">中</text>
<text x="2844.800" y="1840.600" font-size="24" fill="#fff" text-anchor="middle" font-family="'Liberation Sans',sans-serif">9:06</text>
<text x="2845.400" y="1877.800" font-size="24" fill="#fff" text-anchor="middle" letter-spacing="1.200" font-family="'Liberation Sans',sans-serif">2022/4/30</text>
<!-- notification -->
<path d="M2942,1833.800 H2974 V1860.200 H2952 L2958,1867 L2946,1860.200 H2942 Z" fill="#fff"/>
<path d="M2948,1840.800 H2967.700 M2948,1846.800 H2967.700 M2948,1852.800 H2967.700" stroke="#14233c" stroke-width="2.400"/>
<circle cx="2972" cy="1864" r="16" fill="#2c2c2f" stroke="#9aa3b5" stroke-width="1.500"/>
<path d="M2956.700,1866 A15.300,15.300 0 0 1 2974,1848.800 Z" fill="#6e6e70"/>
<text x="2971.800" y="1872" font-size="22" font-weight="bold" fill="#fff" text-anchor="middle" font-family="'Liberation Sans',sans-serif">2</text>
<rect x="3014" y="1810" width="2" height="80" fill="#7d869b"/>
</svg>
</div>
</body>
</html>
